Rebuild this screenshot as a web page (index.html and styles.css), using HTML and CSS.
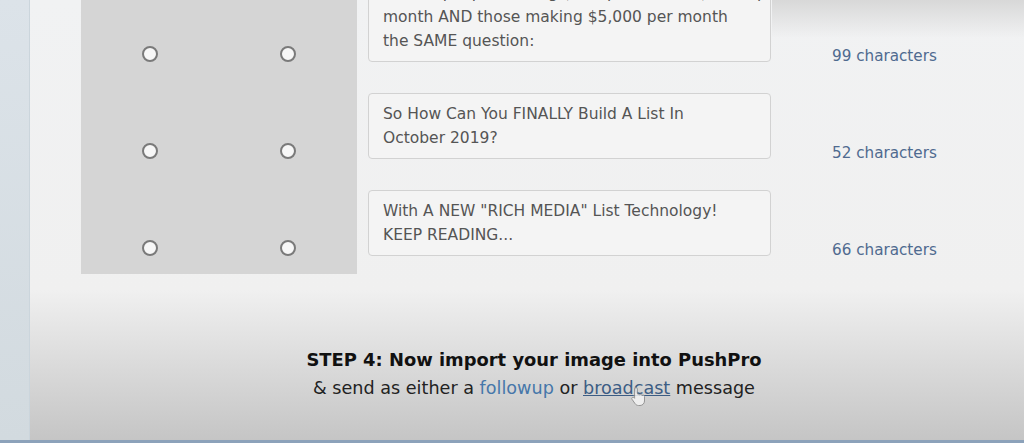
FILE: index.html
```html
<!DOCTYPE html>
<html lang="en">

<head>
    <meta charset="UTF-8">
    <meta name="viewport" content="width=device-width, initial-scale=1.0">
    <title>PushPro - Headline Lines</title>
    <link rel="stylesheet" href="styles.css">
</head>

<body>
    <div class="screen">
        <aside class="strip"></aside>

        <main class="content">
            <!-- Filas de titulares -->
            <div class="rows">
                <div class="row row-tall">
                    <div class="pick"><span class="radio"></span></div>
                    <div class="pick"><span class="radio"></span></div>
                    <div class="line-box">I asked people making $500 per month, $1,000 per<br>month AND those making $5,000 per month<br>the SAME question:</div>
                    <div class="count">99 characters</div>
                </div>

                <div class="row">
                    <div class="pick"><span class="radio"></span></div>
                    <div class="pick"><span class="radio"></span></div>
                    <div class="line-box">So How Can You FINALLY Build A List In<br>October 2019?</div>
                    <div class="count">52 characters</div>
                </div>

                <div class="row">
                    <div class="pick"><span class="radio"></span></div>
                    <div class="pick"><span class="radio"></span></div>
                    <div class="line-box">With A NEW "RICH MEDIA" List Technology!<br>KEEP READING...</div>
                    <div class="count">66 characters</div>
                </div>
            </div>

            <!-- Paso 4 -->
            <div class="step">
                <p class="step-title">STEP 4: Now import your image into PushPro</p>
                <p class="step-text">&amp; send as either a <a class="link">followup</a> or <a class="link link-under">broad<span class="hover-spot">cast<svg class="hand" width="16" height="20" viewBox="0 0 16 20"><path d="M6 1.5c.8 0 1.4.6 1.4 1.4V8l.6-.1c.7 0 1.2.4 1.4 1 .3-.3.7-.5 1.2-.5.7 0 1.2.4 1.4 1 .3-.2.6-.3 1-.3.9 0 1.5.7 1.5 1.5V15c0 2.5-2 4.5-4.5 4.5H8.5c-1.4 0-2.6-.7-3.4-1.8L2 13.3c-.4-.6-.3-1.4.3-1.8.6-.4 1.3-.3 1.8.2l.5.6V2.9c0-.8.6-1.4 1.4-1.4z" fill="#f4f4f4" stroke="#8a8a8a" stroke-width="1"/></svg></span></a> message</p>
            </div>
        </main>
    </div>
</body>

</html>
```

FILE: styles.css
```css
/* Estilo general */
html,
body {
    margin: 0;
    padding: 0;
}

body {
    font-family: "DejaVu Sans", Verdana, sans-serif;
    color: #333;
    overflow: hidden;
}

.screen {
    display: flex;
    height: 443px;
    box-sizing: border-box;
    border-bottom: 3px solid #8ca2ba;
    overflow: hidden;
}

.strip {
    width: 29px;
    flex-shrink: 0;
    background: linear-gradient(to bottom, #dce3e9, #d2dadf);
    border-right: 1px solid #cbd5dc;
}

.content {
    flex: 1;
    background:
        linear-gradient(to bottom, #d8d8d8, rgba(238, 238, 238, 0) 38px) right top / 252px 40px no-repeat,
        linear-gradient(to bottom, #f1f2f3 0, #f0f0f0 290px, #c5c5c5 440px);
}

/* Filas */
.rows {
    margin-top: -41px;
    padding-left: 51px;
}

.row {
    display: grid;
    grid-template-columns: 138px 138px 414px auto;
    align-items: end;
}

.pick {
    align-self: stretch;
    display: flex;
    justify-content: center;
    align-items: flex-end;
    padding-bottom: 18px;
    background-color: #d5d5d5;
}

.radio {
    width: 12px;
    height: 12px;
    border: 2px solid #7a7a7a;
    border-radius: 50%;
    background-color: #f7f7f7;
}

.line-box {
    margin: 13px 0 18px 11px;
    padding: 8px 14px;
    border: 1px solid #d2d2d2;
    border-radius: 4px;
    background-color: #f4f4f4;
    font-size: 15.5px;
    line-height: 24px;
    color: #555;
    white-space: nowrap;
    overflow: hidden;
}

.row-tall .line-box {
    height: 72px;
}

.count {
    margin-left: 61px;
    padding-bottom: 14px;
    font-size: 15.2px;
    line-height: 20px;
    color: #4f6a8f;
}

/* Paso 4 */
.step {
    margin-top: 71px;
    padding-left: 14px;
    text-align: center;
}

.step p {
    margin: 0;
    line-height: 29px;
}

.step-title {
    font-size: 17.9px;
    font-weight: bold;
    color: #111;
}

.step-text {
    font-size: 17.6px;
    color: #222;
}

.link {
    color: #4677aa;
    text-decoration: none;
}

.link-under {
    color: #3c5d84;
    text-decoration: underline;
}

.hover-spot {
    position: relative;
}

.hand {
    position: absolute;
    left: -4px;
    top: 8px;
    opacity: 0.85;
}
```
